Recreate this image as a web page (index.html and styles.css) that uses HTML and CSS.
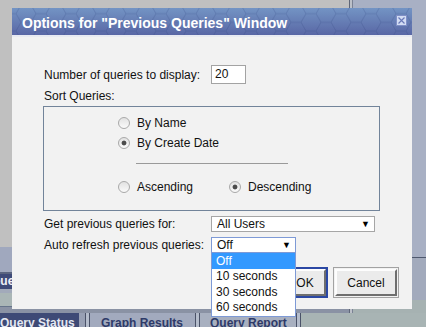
FILE: index.html
```html
<!DOCTYPE html>
<html lang="en">

<head>
    <meta charset="UTF-8">
    <title>Options for "Previous Queries" Window</title>
    <link rel="stylesheet" href="styles.css">
</head>

<body>
    <div class="page">
        <div class="workspace">
            <div class="leftPane">
                <div class="leftFill"></div>
                <div class="strip stripBlue"></div>
                <div class="strip stripQueue"><span>Queue</span></div>
                <div class="strip stripLight"></div>
                <div class="strip stripGreen"></div>
                <div class="strip stripDark"></div>
            </div>
            <div class="paneDivider"></div>
            <div class="rightPane">
                <div class="rpTop"></div>
                <div class="rpMid"></div>
                <div class="rpBottom"></div>
            </div>
        </div>
        <div class="tabBar">
            <div class="tab tabActive">Query Status</div>
            <div class="tabGap"></div>
            <div class="tabSep"></div>
            <div class="tab tabGraph">Graph Results</div>
            <div class="tabSep"></div>
            <div class="tab tabReport">Query Report</div>
            <div class="tabSep"></div>
            <div class="tabRest"></div>
        </div>
    </div>

    <div class="dialog">
        <div class="titleBar">
            <svg class="hexBg" width="400" height="27">
                <defs>
                    <pattern id="hex" width="30" height="17.32" patternUnits="userSpaceOnUse" x="4" y="-3">
                        <path d="M0 8.66 L5 0 L15 0 L20 8.66 L15 17.32 L5 17.32 Z M20 8.66 L30 8.66" fill="none" stroke="rgba(40,60,120,.2)" stroke-width="1"/>
                    </pattern>
                </defs>
                <rect width="400" height="27" fill="url(#hex)"/>
            </svg>
            <span class="titleText">Options for "Previous Queries" Window</span>
            <a class="closeBtn" href="javascript:;">
                <svg width="11" height="11" viewBox="0 0 11 11">
                    <rect x="0.5" y="0.5" width="10" height="10" fill="#d3ddf4" stroke="#7f8fc6"/>
                    <path d="M2.5 2.5 L8.5 8.5 M8.5 2.5 L2.5 8.5" stroke="#6a7ab8" stroke-width="1.2"/>
                </svg>
            </a>
        </div>

        <div class="dlgBody">
            <div class="formRow rowCount">
                <label class="fieldLabel">Number of queries to display:</label>
                <div class="textBox">20</div>
            </div>
            <div class="sortLabel">Sort Queries:</div>

            <div class="sortBox">
                <div class="radioRow">
                    <span class="radio"></span><span class="radioText">By Name</span>
                </div>
                <div class="radioRow">
                    <span class="radio checked"></span><span class="radioText">By Create Date</span>
                </div>
                <div class="sortRule"></div>
                <div class="radioRow">
                    <div class="radioPair">
                        <span class="radio"></span><span class="radioText">Ascending</span>
                    </div>
                    <div class="radioPair">
                        <span class="radio checked"></span><span class="radioText">Descending</span>
                    </div>
                </div>
            </div>

            <div class="formRow rowUsers">
                <label class="fieldLabel">Get previous queries for:</label>
                <div class="selectBox selectUsers">
                    <span>All Users</span><span class="arrow">&#9660;</span>
                </div>
            </div>
            <div class="formRow rowRefresh">
                <label class="fieldLabel">Auto refresh previous queries:</label>
                <div class="selectWrap">
                    <div class="selectBox selectRefresh">
                        <span>Off</span><span class="arrow">&#9660;</span>
                    </div>
                    <ul class="dropList">
                        <li class="picked">Off</li>
                        <li>10 seconds</li>
                        <li>30 seconds</li>
                        <li>60 seconds</li>
                    </ul>
                </div>
            </div>

            <div class="btnRow">
                <a class="btn btnOk" href="javascript:;"><span>OK</span></a>
                <a class="btn btnCancel" href="javascript:;"><span>Cancel</span></a>
            </div>
        </div>
    </div>
</body>

</html>
```

FILE: styles.css
```css
* {
    margin: 0;
    padding: 0;
    box-sizing: border-box;
}

body {
    width: 426px;
    height: 327px;
    overflow: hidden;
    position: relative;
    background: #a8b0c4;
    font-family: "Liberation Sans", Arial, sans-serif;
    font-size: 12px;
    color: #111;
}

a {
    color: #111;
    text-decoration: none;
}

ul,
li {
    list-style: none;
}

/* page behind the dialog */

.page {
    display: flex;
    flex-direction: column;
    height: 327px;
}

.workspace {
    display: flex;
    height: 313px;
}

.leftPane {
    width: 349px;
    display: flex;
    flex-direction: column;
}

.leftFill {
    height: 247px;
    background: #c0c0c0;
}

.stripBlue {
    height: 27px;
    background: #a0a8be;
    border-bottom: 2px solid #5a6480;
}

.stripQueue {
    height: 15px;
    background: #3e4a78;
    color: #eef0f6;
    font-weight: bold;
    line-height: 15px;
    overflow: hidden;
    white-space: nowrap;
}

.stripQueue span {
    display: inline-block;
    margin-left: -23px;
}

.stripLight {
    height: 4px;
    background: #a2aaba;
}

.stripGreen {
    height: 14px;
    background: #aab6b6;
    border-bottom: 1px solid #66748a;
}

.stripDark {
    height: 6px;
    background: #8a92a4;
}

.paneDivider {
    width: 4px;
    background: #bcc0c8;
    border-left: 1px solid #5e6678;
    border-right: 1px solid #7a8294;
}

.rightPane {
    flex: 1;
    display: flex;
    flex-direction: column;
}

.rpTop {
    height: 258px;
    background: #a8b0c4;
    border-bottom: 1px solid #4e586e;
}

.rpMid {
    height: 42px;
    background: #a2aabc;
}

.rpBottom {
    flex: 1;
    background: #a6b2b2;
}

.tabBar {
    display: flex;
    height: 14px;
    background: #98a0b4;
    overflow: hidden;
    font-weight: bold;
    line-height: 14px;
    white-space: nowrap;
}

.tab {
    padding-top: 3px;
    color: #2e3a68;
    background: #a2aabe;
}

.tabActive {
    width: 79px;
    background: #3e4a76;
    color: #e4e8f2;
}

.tabGap {
    width: 6px;
}

.tabSep {
    width: 5px;
    background: #b4bccb;
    border-left: 1px solid #4a5268;
    border-right: 1px solid #4a5268;
}

.tabGraph {
    width: 105px;
    padding-left: 11px;
}

.tabReport {
    width: 96px;
    padding-left: 10px;
    background: #a8b0c0;
}

.tabRest {
    flex: 1;
    background: #a8b4b4;
}

/* dialog */

.dialog {
    position: absolute;
    left: 12px;
    top: 8px;
    width: 400px;
    height: 301px;
    background: #f2f2f2;
}

.dialog::before {
    content: "";
    position: absolute;
    top: 2px;
    left: -4px;
    right: -4px;
    bottom: -4px;
    background: rgba(0, 0, 0, .13);
    z-index: -1;
}

.titleBar {
    position: relative;
    height: 29px;
    display: flex;
    align-items: center;
    justify-content: space-between;
    padding: 3px 5px 0 10px;
    background: linear-gradient(#7394c4, #5967a5);
    border-bottom: 2px solid #e8eaf2;
    overflow: hidden;
}

.hexBg {
    position: absolute;
    left: 0;
    top: 0;
}

.titleText {
    position: relative;
    color: #fff;
    font-size: 14px;
    font-weight: bold;
    white-space: nowrap;
}

.closeBtn {
    position: relative;
    display: block;
    width: 11px;
    height: 11px;
    margin-top: -6px;
}

.closeBtn svg {
    display: block;
}

.dlgBody {
    position: relative;
    padding: 28px 0 0 32px;
}

.formRow {
    display: flex;
    align-items: center;
}

.fieldLabel {
    width: 167px;
    line-height: 14px;
}

.textBox {
    width: 35px;
    height: 19px;
    padding-left: 3px;
    line-height: 17px;
    background: #fff;
    border: 1px solid #a3a3a3;
}

.sortLabel {
    margin-top: 5px;
    line-height: 14px;
}

.sortBox {
    width: 337px;
    height: 105px;
    margin: 3px 0 0 -1px;
    padding: 6px 0 0 74px;
    border: 1px solid #72849a;
}

.radioRow {
    display: flex;
    align-items: center;
    height: 20px;
}

.radioPair {
    display: flex;
    align-items: center;
    width: 111px;
}

.radio {
    width: 12px;
    height: 12px;
    border-radius: 50%;
    border: 1px solid #a9a9a9;
    background: linear-gradient(#e2e2e2, #fafafa);
}

.radio.checked {
    background: radial-gradient(circle, #4c4c4c 0, #4c4c4c 2px, transparent 2.8px), linear-gradient(#e2e2e2, #fafafa);
}

.radioText {
    margin-left: 7px;
}

.sortRule {
    width: 152px;
    height: 1px;
    margin: 10px 0 13px 18px;
    background: #9a9a9a;
}

.rowUsers {
    margin-top: 5px;
}

.rowRefresh {
    margin-top: 5px;
}

.selectBox {
    display: flex;
    align-items: center;
    justify-content: space-between;
    height: 16px;
    padding: 0 4px 0 5px;
    background: #fff;
    border: 1px solid #a6a6a6;
    line-height: 14px;
}

.selectUsers {
    width: 164px;
}

.selectRefresh {
    width: 85px;
    border-color: #7e9ad6;
}

.arrow {
    font-size: 9px;
    color: #000;
}

.selectWrap {
    position: relative;
}

.dropList {
    position: absolute;
    left: 0;
    top: 100%;
    z-index: 5;
    width: 85px;
    background: #fff;
    border: 1px solid #7e9ad6;
    border-top: 0;
    font-size: 12px;
    line-height: 15px;
}

.dropList li {
    height: 15.5px;
    padding-left: 4px;
}

.dropList li.picked {
    height: 16px;
    line-height: 16px;
    background: #3399ff;
    color: #fff;
}

.btnRow {
    display: flex;
    justify-content: flex-end;
    gap: 5px;
    margin: 14px 13px 0 0;
}

.btn {
    display: block;
    height: 31px;
    padding: 1px;
    border: 1px solid #a2a2a2;
    background: #f2f2f2;
}

.btn span {
    display: flex;
    align-items: center;
    justify-content: center;
    height: 100%;
    background: #ebebeb;
    border: 2px solid;
    border-color: #fdfdfd #6e6e6e #6e6e6e #fdfdfd;
}

.btnOk {
    width: 46px;
    padding: 0;
    border: 2px solid #2b48a4;
}

.btnCancel {
    width: 66px;
}
```
